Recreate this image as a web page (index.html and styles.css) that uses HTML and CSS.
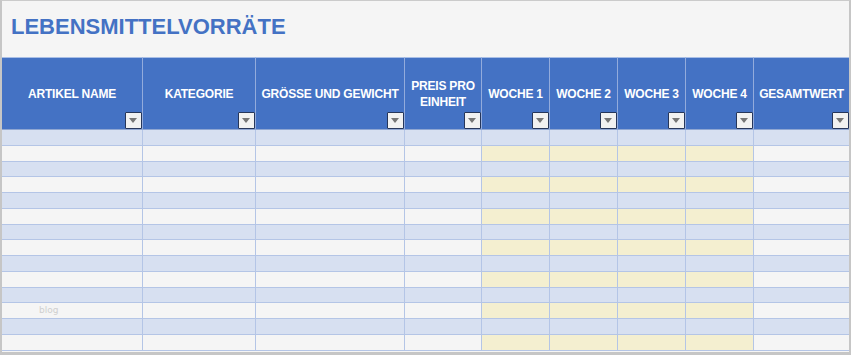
FILE: index.html
```html
<!DOCTYPE html>
<html lang="de">
<head>
<meta charset="utf-8">
<title>Lebensmittelvorräte</title>
<link rel="stylesheet" href="styles.css">
</head>
<body>
<div class="frame">
  <div class="title">LEBENSMITTELVORRÄTE</div>
  <div class="sheet" id="sheet">
    <div class="hc">ARTIKEL NAME<span class="dd"></span></div>
    <div class="hc">KATEGORIE<span class="dd"></span></div>
    <div class="hc">GRÖSSE UND GEWICHT<span class="dd"></span></div>
    <div class="hc">PREIS PRO EINHEIT<span class="dd"></span></div>
    <div class="hc">WOCHE 1<span class="dd"></span></div>
    <div class="hc">WOCHE 2<span class="dd"></span></div>
    <div class="hc">WOCHE 3<span class="dd"></span></div>
    <div class="hc">WOCHE 4<span class="dd"></span></div>
    <div class="hc last">GESAMTWERT<span class="dd"></span></div>
  </div>
</div>
<script src="script.js"></script>
</body>
</html>
```

FILE: script.js
```js
(function () {
  var sheet = document.getElementById('sheet');
  for (var r = 0; r < 14; r++) {
    for (var c = 0; c < 9; c++) {
      var d = document.createElement('div');
      var cls = 'cell ' + (r % 2 === 0 ? 'band' : 'plain');
      if (r % 2 === 1 && c >= 4 && c <= 7) cls += ' week';
      if (c === 8) cls += ' last';
      d.className = cls;
      if (r === 11 && c === 0) {
        d.innerHTML = '<span class="mark">blog</span>';
      }
      sheet.appendChild(d);
    }
  }
})();
```

FILE: styles.css
```css
* { box-sizing: border-box; }
html, body { margin: 0; padding: 0; }
body {
  width: 851px;
  height: 355px;
  overflow: hidden;
  font-family: "Liberation Sans", Arial, sans-serif;
  background: #c9c9c9;
}
.frame {
  width: 851px;
  height: 355px;
  border-left: 2px solid #c6c6c6;
  border-right: 2px solid #c6c6c6;
  border-top: 1px solid #cbcbcb;
  border-bottom: 3px solid #c6c6c6;
  background: #f5f5f5;
  overflow: hidden;
}
.title {
  height: 56px;
  padding: 0 0 4px 9px;
  display: flex;
  align-items: center;
  font-size: 22px;
  font-weight: bold;
  color: #4472c4;
}
.sheet {
  display: grid;
  grid-template-columns: 141px 113px 149px 77px 68px 68px 68px 68px 95px;
  grid-template-rows: 73px;
  grid-auto-rows: 15.75px;
}
.hc {
  position: relative;
  background: #4472c4;
  border-top: 1px solid #a9bfe6;
  border-right: 1px solid #93abdc;
  border-bottom: 1px solid #8fa6d2;
  color: #ffffff;
  font-size: 12px;
  font-weight: bold;
  line-height: 16px;
  text-align: center;
  display: flex;
  align-items: center;
  justify-content: center;
  padding: 0 3px 0 3px;
  letter-spacing: -0.2px;
}
.hc.last { border-right: none; }
.dd {
  position: absolute;
  right: 0;
  bottom: 0;
  width: 17px;
  height: 17px;
  background: #f1f1f1;
  border: 1px solid #26365a;
  border-radius: 1px;
}
.dd::after {
  content: "";
  position: absolute;
  left: 3px;
  top: 5px;
  border-left: 4.5px solid transparent;
  border-right: 4.5px solid transparent;
  border-top: 5px solid #767676;
}
.cell {
  border-right: 1px solid #b4c5e6;
  border-bottom: 1px solid #b4c5e6;
  position: relative;
}
.cell.last { border-right: none; }
.band { background: #d7e0f1; }
.plain { background: #f5f5f5; }
.week { background: #f4efd0; }
.mark {
  display: block;
  padding: 0 0 0 37px;
  font-family: "DejaVu Sans", sans-serif;
  font-size: 9px;
  line-height: 14px;
  color: #cfcfcf;
}
```
